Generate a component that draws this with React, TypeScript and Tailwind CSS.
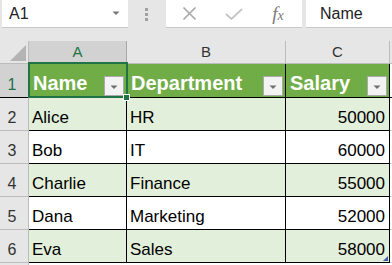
import React from "react";

const F = "font-['Liberation_Sans',Arial,sans-serif]";

function Filter() {
  return (
    <div className="w-[20px] h-[20px] bg-[#f3f3f3] border border-[#a9a9a9] flex items-center justify-center shrink-0">
      <svg width="8" height="5" viewBox="0 0 8 5" className="mt-[2px]">
        <path d="M0.5 0.5h7L4 4z" fill="#6f6f6f" />
      </svg>
    </div>
  );
}

const rows = [
  ["Alice", "HR", "50000"],
  ["Bob", "IT", "60000"],
  ["Charlie", "Finance", "55000"],
  ["Dana", "Marketing", "52000"],
  ["Eva", "Sales", "58000"],
];

export default function App() {
  return (
    <div className={`w-[392px] h-[265px] overflow-hidden bg-[#e6e6e6] ${F} relative`}>
      {/* formula bar */}
      <div className="flex h-[28px]">
        <div className="w-[2px]" />
        <div className="w-[126px] bg-white border-b border-[#c8c8c8] flex items-center pl-[7px] pr-[8px] justify-between">
          <span className="text-[16px] text-[#222] leading-none">A1</span>
          <svg width="8" height="5" viewBox="0 0 8 5">
            <path d="M0.5 0.5h7L4 4z" fill="#777" />
          </svg>
        </div>
        <div className="w-[38px] flex flex-col items-center justify-center gap-[2px] pr-[1px]">
          <div className="w-[3px] h-[3px] bg-[#a0a0a0]" />
          <div className="w-[3px] h-[3px] bg-[#a0a0a0]" />
          <div className="w-[3px] h-[3px] bg-[#a0a0a0]" />
        </div>
        <div className="w-[136px] bg-white border-b border-[#c8c8c8] flex items-center">
          <div className="w-[46px] flex justify-center">
            <svg width="15" height="15" viewBox="0 0 15 15">
              <path d="M1.5 1.5L13.5 13.5M13.5 1.5L1.5 13.5" stroke="#a8a8a8" strokeWidth="1.7" />
            </svg>
          </div>
          <div className="w-[44px] flex justify-center">
            <svg width="18" height="12" viewBox="0 0 18 12">
              <path d="M1 6L6.5 11L17 1" stroke="#c4c4c4" strokeWidth="1.8" fill="none" />
            </svg>
          </div>
          <div className="w-[44px] flex justify-center">
            <span className="font-['Liberation_Serif',serif] italic text-[#7a7a7a] text-[19px] leading-none">
              f<span className="text-[14px]">x</span>
            </span>
          </div>
        </div>
        <div className="w-[4px]" />
        <div className="flex-1 bg-white border-b border-[#c8c8c8] flex items-center pl-[14px]">
          <span className="text-[16px] text-[#222] leading-none">Name</span>
        </div>
      </div>

      <div className="h-[13px]" />

      {/* grid */}
      <div className="relative">
        {/* column headers */}
        <div className="flex h-[23px] border-b border-[#bcbcbc] text-[15px]">
          <div className="w-[29px] border-r border-[#bcbcbc] relative">
            <svg width="17" height="17" viewBox="0 0 17 17" className="absolute left-[10px] top-[4px]">
              <path d="M16 0V16H0z" fill="#b4b4b4" />
            </svg>
          </div>
          <div className="w-[98px] bg-[#d2d2d2] border-r border-[#a8a8a8] flex items-center justify-center text-[#217346]">A</div>
          <div className="w-[159px] border-r border-[#bcbcbc] flex items-center justify-center text-[#333]">B</div>
          <div className="w-[104px] border-r border-[#bcbcbc] flex items-center justify-center text-[#333]">C</div>
          <div className="flex-1" />
        </div>

        {/* header row 1 */}
        <div className="flex h-[34px] border-b border-black">
          <div className="w-[29px] bg-[#d2d2d2] border-r border-[#a8a8a8] flex items-end justify-center pr-[4px] pb-[2px] text-[16px] leading-[20px] text-[#217346]">1</div>
          {["Name", "Department", "Salary"].map((h, i) => (
            <div
              key={h}
              className={`${i === 0 ? "w-[98px]" : i === 1 ? "w-[159px]" : "w-[104px]"} bg-[#70ad47] border-r border-black flex items-end justify-between pl-[4px] pr-[2px] pb-[1px]`}
            >
              <span className="text-white font-bold text-[20px] leading-[23px] mb-[1px]">{h}</span>
              <Filter />
            </div>
          ))}
          <div className="flex-1 bg-white" />
        </div>

        {rows.map((r, idx) => {
          const bg = idx % 2 === 0 ? "bg-[#e2efda]" : "bg-white";
          return (
            <div key={idx} className="flex h-[33px]">
              <div className="w-[29px] border-r border-b border-[#bcbcbc] flex items-end justify-center pr-[4px] pb-[2px] text-[16px] leading-[20px] text-[#333]">
                {idx + 2}
              </div>
              <div className={`w-[98px] ${bg} border-r border-b border-black flex items-end pl-[3px] pb-[2px] text-[17px] leading-[20px] text-black`}>
                {r[0]}
              </div>
              <div className={`w-[159px] ${bg} border-r border-b border-black flex items-end pl-[3px] pb-[2px] text-[17px] leading-[20px] text-black`}>
                {r[1]}
              </div>
              <div className={`w-[104px] ${bg} border-r border-b border-black flex items-end justify-end pr-[4px] pb-[2px] text-[17px] leading-[20px] text-black`}>
                {r[2]}
              </div>
              <div className="flex-1 bg-white border-b border-[#d4d4d4]" />
            </div>
          );
        })}
        <div className="flex h-[10px]">
          <div className="w-[29px] border-r border-[#bcbcbc]" />
          <div className="flex-1 bg-white" />
        </div>

        {/* selection */}
        <div className="absolute left-[28px] top-[21px] w-[100px] h-[36px] border-2 border-[#217346]" />
        <div className="absolute left-[123px] top-[53px] w-[7px] h-[7px] bg-[#217346] border border-white" />
        {/* table resize handle */}
        <svg width="5" height="5" viewBox="0 0 5 5" className="absolute left-[383px] top-[215px]">
          <path d="M5 0V5H0z" fill="#3e5aa8" />
        </svg>
      </div>
    </div>
  );
}
